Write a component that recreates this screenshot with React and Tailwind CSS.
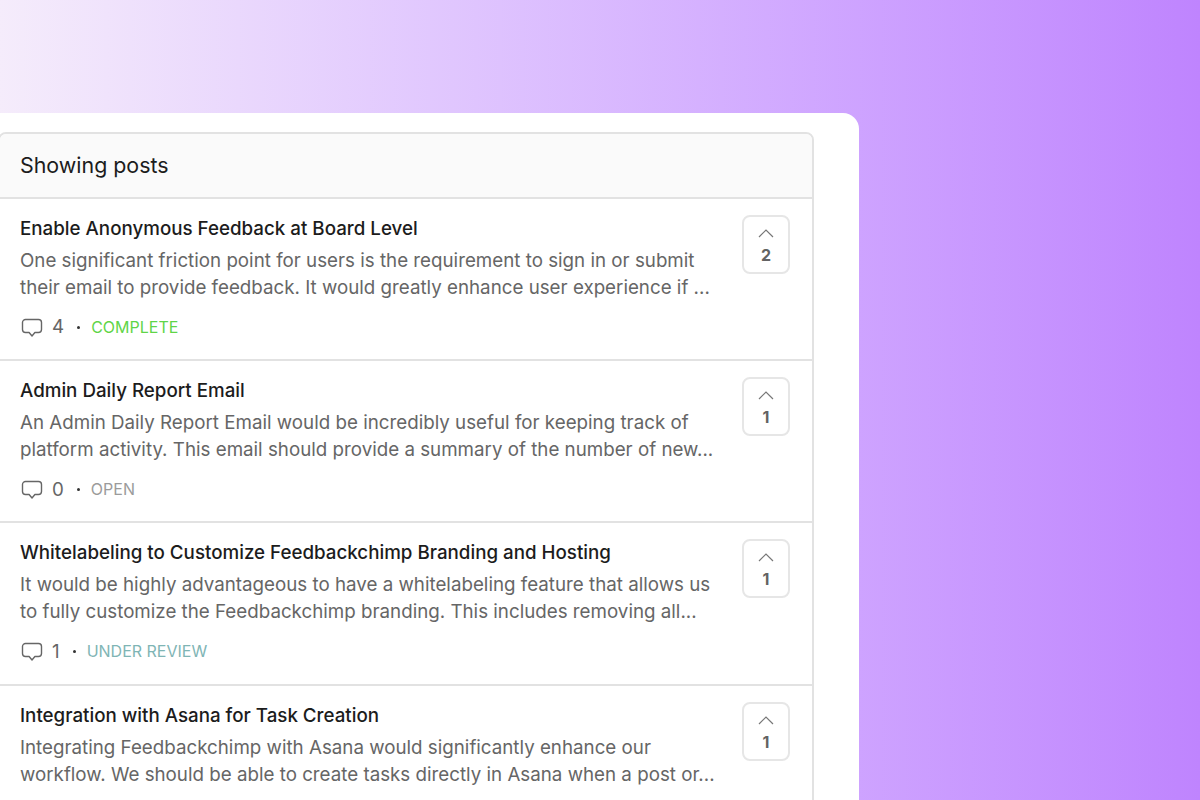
import React from "react";

const posts = [
  {
    title: "Enable Anonymous Feedback at Board Level",
    lines: [
      "One significant friction point for users is the requirement to sign in or submit",
      "their email to provide feedback. It would greatly enhance user experience if ...",
    ],
    comments: 4,
    status: "COMPLETE",
    statusClass: "text-[#5fd548]",
    votes: 2,
  },
  {
    title: "Admin Daily Report Email",
    lines: [
      "An Admin Daily Report Email would be incredibly useful for keeping track of",
      "platform activity. This email should provide a summary of the number of new...",
    ],
    comments: 0,
    status: "OPEN",
    statusClass: "text-[#9b9b9b]",
    votes: 1,
  },
  {
    title: "Whitelabeling to Customize Feedbackchimp Branding and Hosting",
    lines: [
      "It would be highly advantageous to have a whitelabeling feature that allows us",
      "to fully customize the Feedbackchimp branding. This includes removing all...",
    ],
    comments: 1,
    status: "UNDER REVIEW",
    statusClass: "text-[#7fb5b5]",
    votes: 1,
  },
  {
    title: "Integration with Asana for Task Creation",
    lines: [
      "Integrating Feedbackchimp with Asana would significantly enhance our",
      "workflow. We should be able to create tasks directly in Asana when a post or...",
    ],
    comments: 0,
    status: "OPEN",
    statusClass: "text-[#9b9b9b]",
    votes: 1,
  },
];

const CommentIcon = () => (
  <svg width="22" height="20" viewBox="0 0 22 20" fill="none" stroke="#666666" strokeWidth="1.4" strokeLinejoin="round">
    <path d="M4.500 1.500h13a3 3 0 0 1 3 3v7a3 3 0 0 1-3 3h-3.600L11 18l-2.900-3.500H4.500a3 3 0 0 1-3-3v-7a3 3 0 0 1 3-3z" />
  </svg>
);

const PostRow = ({ post }) => (
  <div className="h-[162.2px] flex border-b-2 border-[#e2e2e2] pl-[20px] pr-[22px]">
    <div className="flex-1 min-w-0 pt-[16px]">
      <div className="text-[18.75px] leading-[27px] font-medium text-[#1c1c1c] whitespace-nowrap">{post.title}</div>
      <div className="mt-[5px] text-[18.75px] leading-[27px] text-[#666666] whitespace-nowrap">
        {post.lines.map((line) => (
          <div key={line}>{line}</div>
        ))}
      </div>
      <div className="mt-[13px] h-[27px] flex items-center text-[#666666]">
        <span className="ml-[1px]">
          <CommentIcon />
        </span>
        <span className="ml-[9px] text-[18.75px]">{post.comments}</span>
        <span className="ml-[13px] mr-[11px] w-[3px] h-[3px] rounded-full bg-[#333333]" />
        <span className={`text-[16px] pb-[2px] ${post.statusClass}`}>{post.status}</span>
      </div>
    </div>
    <div className="shrink-0 mt-[16px] w-[48px] h-[59px] border-2 border-[#e6e6e6] rounded-[8px] flex flex-col items-center pt-[12px]">
      <svg width="16" height="9" viewBox="0 0 16 9" fill="none" stroke="#777777" strokeWidth="1.2">
        <path d="M1 8l7-7 7 7" />
      </svg>
      <span className="mt-[5px] text-[16px] leading-[24px] font-bold text-[#636363]">{post.votes}</span>
    </div>
  </div>
);

export default function App() {
  return (
    <div className="h-[800px] w-[1200px] overflow-hidden bg-gradient-to-r from-[#f5ecfb] to-[#bf84fe] pt-[113px] font-['Inter',sans-serif]">
      <div className="-ml-[20px] w-[879px] h-[800px] bg-white rounded-[16px] pt-[19px] pl-[18px]">
        <div className="w-[816px] border-2 border-[#e2e2e2] rounded-[8px] overflow-hidden">
          <div className="h-[65px] bg-[#fafafa] border-b-2 border-[#e2e2e2] pl-[20px] flex items-center text-[21.4px] text-[#1c1c1c]">
            Showing posts
          </div>
          {posts.map((post) => (
            <PostRow key={post.title} post={post} />
          ))}
        </div>
      </div>
    </div>
  );
}
